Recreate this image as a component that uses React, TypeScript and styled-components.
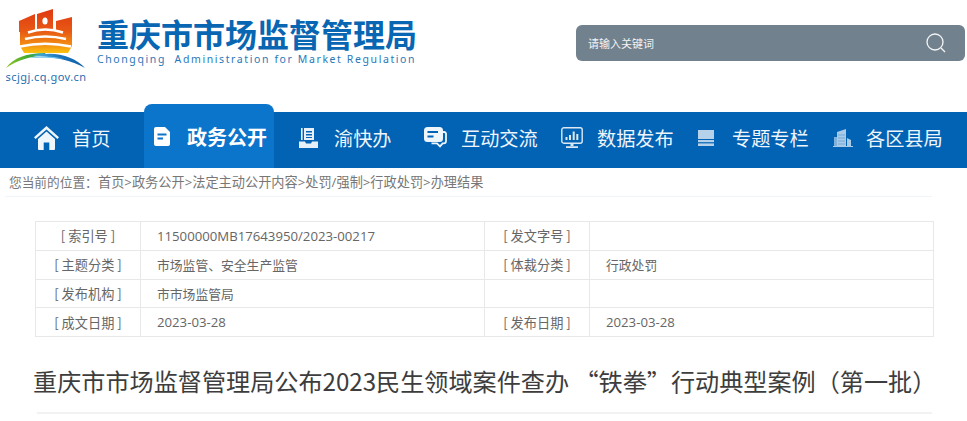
import React from "react";
import styled, { createGlobalStyle } from "styled-components";

const CJK = `"Noto Sans CJK SC", "Noto Sans", sans-serif`;
const LATIN = `"Open Sans", "Noto Sans CJK SC", sans-serif`;

const Global = createGlobalStyle`
  html, body { margin: 0; padding: 0; background: #fff; }
  body { font-family: ${CJK}; overflow: hidden; }
`;

const Page = styled.div`
  width: 967px;
  height: 421px;
  overflow: hidden;
  background: #fff;
`;

const Header = styled.header`
  height: 104px;
  padding: 8px 2px 0 5px;
  box-sizing: border-box;
  display: flex;
  justify-content: space-between;
  align-items: flex-start;
`;

const LogoBox = styled.div`
  display: flex;
  align-items: flex-start;
  gap: 10px;
`;

const LogoMark = styled.div`
  width: 82px;
  display: flex;
  flex-direction: column;
  align-items: center;
`;

const Domain = styled.div`
  font: 11px/12px "Noto Sans", sans-serif;
  color: #1f6fb3;
  margin-top: 1px;
  letter-spacing: 0.45px;
  white-space: nowrap;
`;

const Brand = styled.div`
  padding-top: 5px;
`;

const BrandName = styled.div`
  font: 700 32px/40px ${CJK};
  color: #0866b2;
  white-space: nowrap;
`;

const BrandEn = styled.div`
  font: 10.5px/12px "Noto Sans", sans-serif;
  color: #2a78b8;
  letter-spacing: 1.6px;
  white-space: pre;
`;

const Search = styled.div`
  width: 389px;
  height: 36px;
  margin-top: 17px;
  background: #72818e;
  border-radius: 6px;
  display: flex;
  align-items: center;
  justify-content: space-between;
  padding: 0 18px 0 12px;
  box-sizing: border-box;
  color: #f2f4f5;
  font-size: 11px;
`;

const Nav = styled.nav`
  height: 56px;
  margin-top: 8px;
  background: #0263b5;
  display: flex;
  align-items: stretch;
  padding-left: 34px;
  color: #eef5fb;
  font-size: 19.2px;
`;

const NavItem = styled.div<{ $w: number; $gap: number; $pad?: number }>`
  width: ${(p) => p.$w}px;
  padding: 0 0 5px ${(p) => p.$pad ?? 0}px;
  display: flex;
  align-items: center;
  gap: ${(p) => p.$gap}px;
  white-space: nowrap;
  box-sizing: border-box;
`;

const ActiveItem = styled.div`
  width: 130px;
  height: 64px;
  margin-top: -8px;
  padding: 0 0 0 10px;
  display: flex;
  align-items: center;
  gap: 17px;
  box-sizing: border-box;
  background: #0b74cb;
  border-radius: 8px 8px 0 0;
  font-size: 20px;
  font-weight: 700;
  color: #fff;
  white-space: nowrap;
`;

const Crumbs = styled.div`
  height: 28px;
  margin: 0 35px 0 5px;
  padding-left: 4px;
  border-bottom: 1px solid #eef5fb;
  font: 13.2px/28px ${LATIN};
  color: #777;
  white-space: nowrap;
`;

const CrumbLabel = styled.span`
  display: inline-block;
  width: 89px;
  font-size: 12.7px;
`;

const Meta = styled.div`
  margin: 24px 33px 0 35px;
  display: grid;
  grid-template-columns: 105px 344px 105px 1fr;
  grid-auto-rows: 28.75px;
  border-top: 1px solid #e8e8e8;
  border-left: 1px solid #e8e8e8;
  font-size: 12.8px;
  color: #666;
`;

const Cell = styled.div<{ $label?: boolean; $latin?: boolean }>`
  border-right: 1px solid #e8e8e8;
  border-bottom: 1px solid #e8e8e8;
  display: flex;
  align-items: center;
  box-sizing: border-box;
  white-space: nowrap;
  justify-content: ${(p) => (p.$label ? "center" : "flex-start")};
  padding-left: ${(p) => (p.$label ? "0" : "16px")};
  font-family: ${(p) => (p.$latin ? LATIN : CJK)};
  font-size: ${(p) => (p.$latin || p.$label ? "13.2px" : "inherit")};
`;

const Title = styled.h1`
  margin: 28px 35px 0 37px;
  padding: 0 0 15px;
  border-bottom: 2px solid #f2f2f2;
  font: 400 24.13px/32px ${CJK};
  color: #3d3d3d;
  white-space: nowrap;
  text-indent: -4px;
`;

const Logo = () => (
  <svg width="82" height="62" viewBox="0 0 82 62">
    <defs>
      <linearGradient id="lg" gradientUnits="userSpaceOnUse" x1="0" y1="2" x2="0" y2="45">
        <stop offset="0" stopColor="#e03a12" />
        <stop offset="0.5" stopColor="#e85a14" />
        <stop offset="0.8" stopColor="#f28c12" />
        <stop offset="1" stopColor="#fcc40c" />
      </linearGradient>
      <linearGradient id="arcGreen" x1="0" y1="0" x2="1" y2="0">
        <stop offset="0" stopColor="#8fc31f" />
        <stop offset="0.6" stopColor="#3aa838" />
        <stop offset="1" stopColor="#2c9fd0" />
      </linearGradient>
      <linearGradient id="arcBlue" x1="0" y1="0" x2="1" y2="0">
        <stop offset="0" stopColor="#57b7e3" />
        <stop offset="0.5" stopColor="#1c75bc" />
        <stop offset="1" stopColor="#0f5ea8" />
      </linearGradient>
    </defs>
    <path fill="url(#lg)" d="M14 13 L30 6 V24 H14 Z M32 6 L48 1 V24 H32 Z M51 13 L67 9 V24 H51 Z" />
    <path fill="url(#lg)" d="M15 22 H67 V38 L63 45 H19 L15 38 Z" />
    <ellipse cx="40" cy="13" rx="2.6" ry="3.6" fill="#fff" />
    <path fill="none" stroke="#fff" strokeWidth="2.4" d="M23 24.5 Q40 18.5 58 24.5" />
    <path fill="none" stroke="#fff" strokeWidth="2.4" d="M20 31 Q40 26 61 31" />
    <path fill="none" stroke="#fff" strokeWidth="2.6" d="M15 38.5 Q40 33 66 38.5" />
    <path fill="url(#arcGreen)" d="M1 60 C8 50 22 45 40 45 L42 47.5 C26 48 12 52 1 60 Z" />
    <path fill="url(#arcBlue)" d="M28 48 C48 42 70 48 80 60 C68 53 50 48.5 28 48 Z" />
    <path fill="#6cc3ea" d="M24 50 C34 48 48 48 58 51 C46 49.5 34 49.5 24 50 Z" />
  </svg>
);

const SearchIcon = () => (
  <svg width="22" height="22" viewBox="0 0 22 22" fill="none" stroke="#f4f6f7" strokeWidth="1.3">
    <circle cx="10" cy="10" r="8" />
    <path d="M16 16 L20 20" />
  </svg>
);

const HomeIcon = () => (
  <svg width="25" height="24" viewBox="0 0 25 24" fill="#eef5fb">
    <path d="M12.5 0 L25 11.2 L23.4 13 L12.5 3.4 L1.6 13 L0 11.2 Z" />
    <path d="M4 13 L12.5 5.6 L21 13 V23 a1 1 0 0 1 -1 1 H15.3 V16.5 H9.7 V24 H5 a1 1 0 0 1 -1 -1 Z" />
  </svg>
);

const DocIcon = () => (
  <svg width="16" height="19" viewBox="0 0 16 19">
    <path fill="#fff" d="M2 0 H11 L16 5 V17 a2 2 0 0 1 -2 2 H2 a2 2 0 0 1 -2 -2 V2 a2 2 0 0 1 2 -2 Z" />
    <path fill="#0b74cb" d="M3.5 6.5 H12.5 V8.5 H3.5 Z M3.5 10.5 H9 V12.5 H3.5 Z" />
  </svg>
);

const DeskIcon = () => (
  <svg width="19" height="20" viewBox="0 0 19 20" fill="#e6f0f8">
    <path d="M2 0 H3.6 V12 H2 Z" />
    <path d="M5 0 H15 V12 H5 Z M7 3 V4.4 H13 V3 Z M7 6 V7.4 H13 V6 Z M7 9 V10 H13 V9 Z" fillRule="evenodd" />
    <path d="M0 13.5 H6 L7 15.5 H12 L13 13.5 H19 V20 H0 Z" />
  </svg>
);

const ChatIcon = () => (
  <svg width="23" height="21" viewBox="0 0 23 21">
    <path fill="none" stroke="#eef5fb" strokeWidth="1.8" d="M19 5 h1.2 a1.8 1.8 0 0 1 1.8 1.8 V14 a2.4 2.4 0 0 1 -2.4 2.4 h-1 l-2.6 3 l-3 -3 h-5.5" />
    <rect x="0" y="0" width="19" height="15" rx="3.5" fill="#eef5fb" />
    <path fill="#0263b5" d="M3.5 4 H14 V6 H3.5 Z M3.5 8.5 H9.5 V10.5 H3.5 Z" />
  </svg>
);

const ScreenIcon = () => (
  <svg width="22" height="22" viewBox="0 0 22 22">
    <rect x="0.8" y="0.8" width="20.4" height="15.4" rx="2" fill="none" stroke="#dce9f4" strokeWidth="1.4" />
    <path fill="#dce9f4" d="M4.5 10 H6.5 V13 H4.5 Z M8 8 H10 V13 H8 Z M11.7 4.5 H13.7 V13 H11.7 Z M15.3 7 H17.3 V13 H15.3 Z" />
    <path fill="#dce9f4" d="M9.5 16 H12.5 V19 H9.5 Z M5 19.2 H17 V21 H5 Z" />
  </svg>
);

const StackIcon = () => (
  <svg width="16" height="16" viewBox="0 0 16 16" fill="#b6d2ea">
    <rect x="0" y="0" width="16" height="9" />
    <rect x="0" y="10" width="16" height="2.2" />
    <rect x="0" y="13.4" width="16" height="2.6" />
  </svg>
);

const BuildingIcon = () => (
  <svg width="20" height="18" viewBox="0 0 20 18" fill="#a9cbe7">
    <path d="M4 3 L13 0 V17 H4 Z" />
    <path d="M1 8 H4 V17 H1 Z" opacity="0.75" />
    <path d="M14 9 L18 11 V17 H14 Z" />
    <path d="M0 17 H20 V18 H0 Z" />
    <path stroke="#5f9ccd" strokeWidth="0.7" d="M5 6 H12 M5 9 H12 M5 12 H12 M5 15 H12" />
  </svg>
);

const rows = [
  ["[ 索引号 ]", "11500000MB17643950/2023-00217", "[ 发文字号 ]", ""],
  ["[ 主题分类 ]", "市场监管、安全生产监管", "[ 体裁分类 ]", "行政处罚"],
  ["[ 发布机构 ]", "市市场监管局", "", ""],
  ["[ 成文日期 ]", "2023-03-28", "[ 发布日期 ]", "2023-03-28"],
];

export default function App() {
  return (
    <Page>
      <Global />
      <Header>
        <LogoBox>
          <LogoMark>
            <Logo />
            <Domain>scjgj.cq.gov.cn</Domain>
          </LogoMark>
          <Brand>
            <BrandName>重庆市市场监督管理局</BrandName>
            <BrandEn>{"Chongqing  Administration for Market Regulation"}</BrandEn>
          </Brand>
        </LogoBox>
        <Search>
          <span>请输入关键词</span>
          <SearchIcon />
        </Search>
      </Header>
      <Nav>
        <NavItem $w={110} $gap={13}><HomeIcon />首页</NavItem>
        <ActiveItem><DocIcon />政务公开</ActiveItem>
        <NavItem $w={150} $gap={16} $pad={25}><DeskIcon />渝快办</NavItem>
        <NavItem $w={137} $gap={14}><ChatIcon />互动交流</NavItem>
        <NavItem $w={137} $gap={14}><ScreenIcon />数据发布</NavItem>
        <NavItem $w={135} $gap={18}><StackIcon />专题专栏</NavItem>
        <NavItem $w={120} $gap={13}><BuildingIcon />各区县局</NavItem>
      </Nav>
      <Crumbs><CrumbLabel>您当前的位置：</CrumbLabel>首页&gt;政务公开&gt;法定主动公开内容&gt;处罚/强制&gt;行政处罚&gt;办理结果</Crumbs>
      <Meta>
        {rows.flatMap((r, i) =>
          r.map((t, j) => (
            <Cell key={`${i}-${j}`} $label={j % 2 === 0} $latin={/^\d/.test(t)}>{t}</Cell>
          ))
        )}
      </Meta>
      <Title>重庆市市场监督管理局公布2023民生领域案件查办 “铁拳”行动典型案例（第一批）</Title>
    </Page>
  );
}
